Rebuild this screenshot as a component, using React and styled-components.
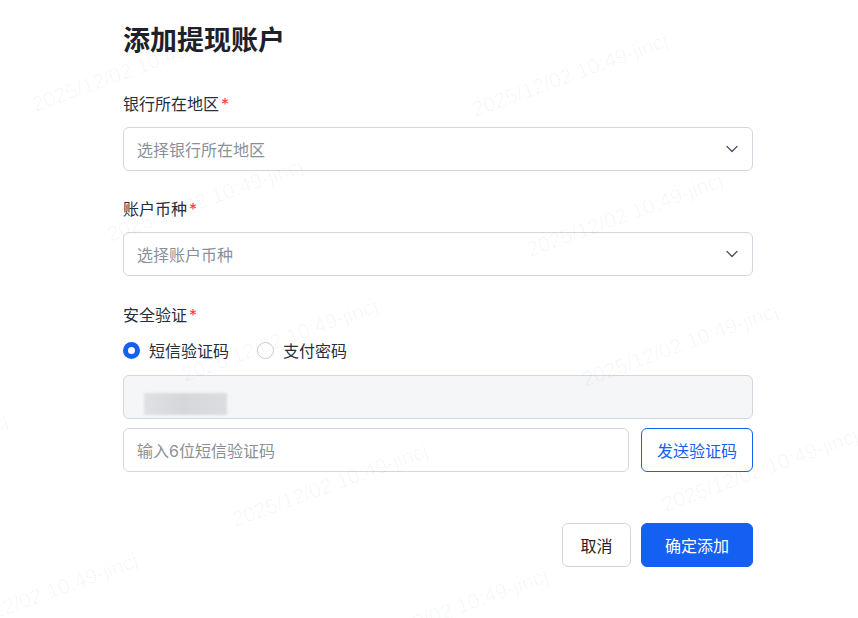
import React from "react";
import styled, { createGlobalStyle } from "styled-components";

const GlobalStyle = createGlobalStyle`
  * { box-sizing: border-box; }
  body {
    margin: 0;
    background: #fff;
    font-family: Inter, "Noto Sans CJK SC", "Noto Sans", sans-serif;
    color: #1d2129;
  }
`;

const Page = styled.div`
  position: relative;
  width: 858px;
  height: 618px;
  overflow: hidden;
  padding: 23px 105px 0 123px;
  background: #fff;
`;

const Title = styled.h1`
  margin: 0;
  font-size: 27px;
  line-height: 36px;
  font-weight: 700;
  color: #1d2129;
`;

const Field = styled.div`
  display: flex;
  flex-direction: column;
  margin-top: ${(p) => p.$top}px;
`;

const Label = styled.div`
  font-size: 16px;
  line-height: 22px;
  color: #272e3b;
  margin-bottom: ${(p) => p.$gap ?? 12}px;

  span {
    color: #f53f3f;
    margin-left: 2px;
  }
`;

const SelectBox = styled.div`
  height: 44px;
  border: 1px solid #d3d6dc;
  border-radius: 6px;
  display: flex;
  align-items: center;
  justify-content: space-between;
  padding: 0 14px 0 13px;
  font-size: 16px;
  color: #8a9099;
  background: #fff;
`;

const RadioRow = styled.div`
  display: flex;
  align-items: center;
  height: 24px;
  gap: 28px;
`;

const RadioItem = styled.label`
  display: flex;
  align-items: center;
  gap: 9px;
  font-size: 16px;
  color: #272e3b;
`;

const RadioDot = styled.span`
  width: 17px;
  height: 17px;
  border-radius: 50%;
  background: #fff;
  border: ${(p) => (p.$checked ? "5px solid #1460f2" : "1px solid #c9cdd4")};
`;

const DisabledInput = styled.div`
  margin-top: 13px;
  height: 44px;
  border: 1px solid #d3d6dc;
  border-radius: 6px;
  background: #f5f6f8;
  display: flex;
  align-items: center;
  padding: 14px 0 0 20px;
`;

const Redacted = styled.span`
  width: 83px;
  height: 22px;
  background: linear-gradient(90deg, #e0e1e4 0%, #d6d7da 45%, #dcdde0 100%);
  filter: blur(1.2px);
`;

const CodeRow = styled.div`
  margin-top: 9px;
  display: flex;
  gap: 12px;
`;

const TextInput = styled.div`
  flex: 1;
  height: 44px;
  border: 1px solid #d3d6dc;
  border-radius: 6px;
  display: flex;
  align-items: center;
  padding: 0 13px;
  font-size: 16px;
  color: #8a9099;
`;

const Button = styled.button`
  height: 44px;
  width: ${(p) => p.$width}px;
  border-radius: 6px;
  font-family: inherit;
  font-size: 16px;
  cursor: pointer;
  border: 1px solid
    ${(p) => (p.$variant === "ghost" ? "#d3d6dc" : "#1460f2")};
  background: ${(p) => (p.$variant === "primary" ? "#1460f2" : "#fff")};
  color: ${(p) =>
    p.$variant === "primary"
      ? "#fff"
      : p.$variant === "outline"
      ? "#1460f2"
      : "#1d2129"};
  padding: 0;
`;

const Footer = styled.div`
  margin-top: 51px;
  display: flex;
  justify-content: flex-end;
  gap: 10px;
`;

const WatermarkLayer = styled.div`
  position: absolute;
  inset: 0;
  pointer-events: none;
`;

const Mark = styled.span`
  position: absolute;
  left: ${(p) => p.$x}px;
  top: ${(p) => p.$y}px;
  transform: translate(-50%, -50%) rotate(-20deg);
  font-size: 21px;
  white-space: nowrap;
  color: rgba(0, 0, 0, 0.035);
  font-family: "Liberation Sans", sans-serif;
`;

const Chevron = () => (
  <svg width="12" height="8" viewBox="0 0 12 8" fill="none">
    <path
      d="M1 1.5L6 6.5L11 1.5"
      stroke="#4e5969"
      strokeWidth="1.4"
      strokeLinecap="round"
      strokeLinejoin="round"
    />
  </svg>
);

const marks = [
  [130, 70],
  [570, 75],
  [205, 200],
  [625, 215],
  [280, 340],
  [680, 345],
  [-90, 455],
  [330, 485],
  [760, 470],
  [40, 595],
  [450, 610],
];

export default function App() {
  return (
    <>
      <GlobalStyle />
      <Page>
        <Title>添加提现账户</Title>

        <Field $top={34}>
          <Label>
            银行所在地区<span>*</span>
          </Label>
          <SelectBox>
            选择银行所在地区
            <Chevron />
          </SelectBox>
        </Field>

        <Field $top={27}>
          <Label>
            账户币种<span>*</span>
          </Label>
          <SelectBox>
            选择账户币种
            <Chevron />
          </SelectBox>
        </Field>

        <Field $top={28}>
          <Label>
            安全验证<span>*</span>
          </Label>
          <RadioRow>
            <RadioItem>
              <RadioDot $checked />
              短信验证码
            </RadioItem>
            <RadioItem>
              <RadioDot />
              支付密码
            </RadioItem>
          </RadioRow>
          <DisabledInput>
            <Redacted />
          </DisabledInput>
          <CodeRow>
            <TextInput>输入6位短信验证码</TextInput>
            <Button $variant="outline" $width={112}>
              发送验证码
            </Button>
          </CodeRow>
        </Field>

        <Footer>
          <Button $variant="ghost" $width={69}>
            取消
          </Button>
          <Button $variant="primary" $width={112}>
            确定添加
          </Button>
        </Footer>

        <WatermarkLayer>
          {marks.map(([x, y], i) => (
            <Mark key={i} $x={x} $y={y}>
              2025/12/02 10:49-jincj
            </Mark>
          ))}
        </WatermarkLayer>
      </Page>
    </>
  );
}
